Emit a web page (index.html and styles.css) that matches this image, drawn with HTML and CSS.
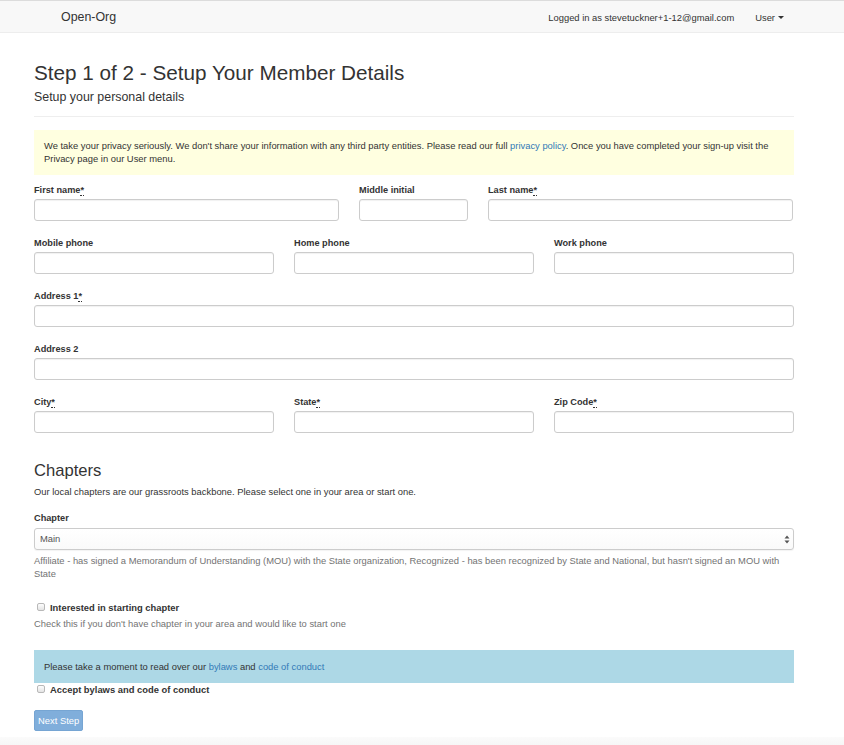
FILE: index.html
```html
<!DOCTYPE html>
<html lang="en">
<head>
<meta charset="utf-8">
<title>Open-Org - Step 1 of 2</title>
<link rel="stylesheet" href="styles.css">
</head>
<body>
<nav class="navbar">
  <a class="brand" href="#">Open-Org</a>
  <div class="nav-right">
    <span class="logged">Logged in as stevetuckner+1-12@gmail.com</span>
    <a class="user-menu" href="#">User <span class="caret"></span></a>
  </div>
</nav>

<main class="container">
  <h2 class="page-title">Step 1 of 2 - Setup Your Member Details</h2>
  <h4 class="subtitle">Setup your personal details</h4>
  <hr class="divider">

  <div class="alert alert-yellow">We take your privacy seriously. We don't share your information with any third party entities. Please read our full <a href="#">privacy policy</a>. Once you have completed your sign-up visit the Privacy page in our User menu.</div>

  <form class="form">
    <div class="row row-name">
      <div class="form-group">
        <label>First name<abbr title="required">*</abbr></label>
        <input class="form-control" type="text">
      </div>
      <div class="form-group">
        <label>Middle initial</label>
        <input class="form-control" type="text">
      </div>
      <div class="form-group">
        <label>Last name<abbr title="required">*</abbr></label>
        <input class="form-control" type="text">
      </div>
    </div>

    <div class="row row-three">
      <div class="form-group">
        <label>Mobile phone</label>
        <input class="form-control" type="text">
      </div>
      <div class="form-group">
        <label>Home phone</label>
        <input class="form-control" type="text">
      </div>
      <div class="form-group">
        <label>Work phone</label>
        <input class="form-control" type="text">
      </div>
    </div>

    <div class="form-group">
      <label>Address 1<abbr title="required">*</abbr></label>
      <input class="form-control" type="text">
    </div>

    <div class="form-group">
      <label>Address 2</label>
      <input class="form-control" type="text">
    </div>

    <div class="row row-three">
      <div class="form-group">
        <label>City<abbr title="required">*</abbr></label>
        <input class="form-control" type="text">
      </div>
      <div class="form-group">
        <label>State<abbr title="required">*</abbr></label>
        <input class="form-control" type="text">
      </div>
      <div class="form-group">
        <label>Zip Code<abbr title="required">*</abbr></label>
        <input class="form-control" type="text">
      </div>
    </div>

    <h3 class="section-title">Chapters</h3>
    <p class="section-desc">Our local chapters are our grassroots backbone. Please select one in your area or start one.</p>

    <div class="chapter-group">
      <label>Chapter</label>
      <div class="select-wrap">
        <select class="form-control select">
          <option>Main</option>
        </select>
        <svg class="select-arrows" width="6" height="9" viewBox="0 0 6 9"><path d="M3 0.5 L5.5 3.5 L0.5 3.5 Z M3 8.5 L5.5 5.5 L0.5 5.5 Z" fill="#555"/></svg>
      </div>
      <p class="help-block">Affiliate - has signed a Memorandum of Understanding (MOU) with the State organization, Recognized - has been recognized by State and National, but hasn't signed an MOU with State</p>
    </div>

    <div class="checkbox-group">
      <label class="check"><input type="checkbox"> Interested in starting chapter</label>
      <p class="help-block help-check">Check this if you don't have chapter in your area and would like to start one</p>
    </div>

    <div class="alert alert-blue">Please take a moment to read over our <a href="#">bylaws</a> and <a href="#">code of conduct</a></div>
    <label class="check"><input type="checkbox"> Accept bylaws and code of conduct</label>

    <button class="btn-primary" type="button" disabled>Next Step</button>
  </form>
</main>
<footer class="footer"></footer>
</body>
</html>
```

FILE: styles.css
```css
* {
  box-sizing: border-box;
}

html, body {
  margin: 0;
  padding: 0;
}

body {
  font-family: "Liberation Sans", Arial, sans-serif;
  font-size: 9.4px;
  line-height: 13px;
  color: #333;
  background: #fff;
}

a {
  color: #337ab7;
  text-decoration: none;
}

/* Navbar */
.navbar {
  height: 33px;
  background: #f8f8f8;
  border-top: 1px solid #dcdcdc;
  border-bottom: 1px solid #ededed;
  display: flex;
  align-items: center;
  justify-content: space-between;
  padding: 1px 60px 0 61px;
}

.brand {
  color: #333;
  font-size: 12.4px;
  line-height: 14px;
}

.nav-right {
  display: flex;
  align-items: center;
  gap: 21px;
  color: #333;
  font-size: 9.4px;
}

.user-menu {
  color: #333;
  display: flex;
  align-items: center;
  gap: 3px;
}

.caret {
  display: inline-block;
  width: 0;
  height: 0;
  border-top: 3px solid #333;
  border-left: 3px solid transparent;
  border-right: 3px solid transparent;
}

/* Main */
.container {
  width: 760px;
  margin: 0 0 0 34px;
}

.page-title {
  font-size: 20.7px;
  line-height: 22px;
  font-weight: normal;
  margin: 29px 0 0;
  color: #333;
}

.subtitle {
  font-size: 12.4px;
  line-height: 13px;
  font-weight: normal;
  margin: 6.5px 0 0;
  color: #333;
}

.divider {
  border: 0;
  border-top: 1px solid #eee;
  margin: 12px 0 13px;
  height: 0;
}

.alert {
  padding: 9.5px 10px;
}

.alert-yellow {
  background: #ffffe0;
  margin-bottom: 9.5px;
}

.alert-blue {
  background: #add8e6;
  padding: 10px 10px;
  margin-top: 20px;
}

/* Form */
.form {
  margin: 0;
}

.row {
  display: grid;
  column-gap: 20px;
}

.row-name {
  grid-template-columns: 305px 109px 305px;
}

.row-three {
  grid-template-columns: repeat(3, 1fr);
}

.form-group {
  margin-bottom: 16.5px;
}

label {
  display: block;
  font-weight: bold;
  font-size: 9.2px;
  line-height: 13px;
  margin-bottom: 1.5px;
}

abbr {
  text-decoration: none;
  border-bottom: 1px dotted #333;
  cursor: help;
}

.form-control {
  display: block;
  width: 100%;
  height: 22px;
  padding: 0 6px;
  font-family: inherit;
  font-size: 9.4px;
  color: #555;
  background: #fff;
  border: 1px solid #ccc;
  border-radius: 3px;
  box-shadow: inset 0 1px 1px rgba(0, 0, 0, 0.06);
}

.section-title {
  font-size: 16.6px;
  line-height: 17px;
  font-weight: normal;
  margin: 13px 0 0;
}

.section-desc {
  margin: 6px 0 14px;
}

.chapter-group label {
  margin-bottom: 2.5px;
}

.select-wrap {
  position: relative;
}

.select {
  appearance: none;
  -webkit-appearance: none;
  background: linear-gradient(#fff, #fafafa);
  box-shadow: 0 1px 1px rgba(0, 0, 0, 0.05);
  color: #555;
  padding-left: 5px;
}

.select-arrows {
  position: absolute;
  right: 4px;
  top: 7px;
}

.help-block {
  color: #737373;
  margin: 4px 0 0;
}

.checkbox-group {
  margin-top: 21px;
}

.check {
  display: flex;
  align-items: center;
  gap: 5px;
  padding-left: 3px;
  margin: 0;
  font-weight: bold;
  font-size: 9.4px;
}

.check input {
  appearance: none;
  -webkit-appearance: none;
  width: 8px;
  height: 8px;
  margin: 0;
  border: 1px solid #b8b8b8;
  border-radius: 2px;
  background: linear-gradient(#fdfdfd, #e4e4e4);
}

.help-check {
  margin-top: 3px;
}

.btn-primary {
  display: block;
  margin-top: 14px;
  height: 21px;
  padding: 0 3px;
  font-family: inherit;
  font-size: 9.4px;
  color: #fff;
  background: #80aedb;
  border: 1px solid #76a5d3;
  border-radius: 2px;
}

.footer {
  height: 8px;
  margin-top: 6px;
  background: linear-gradient(#fbfbfb, #f6f6f6);
}
```
